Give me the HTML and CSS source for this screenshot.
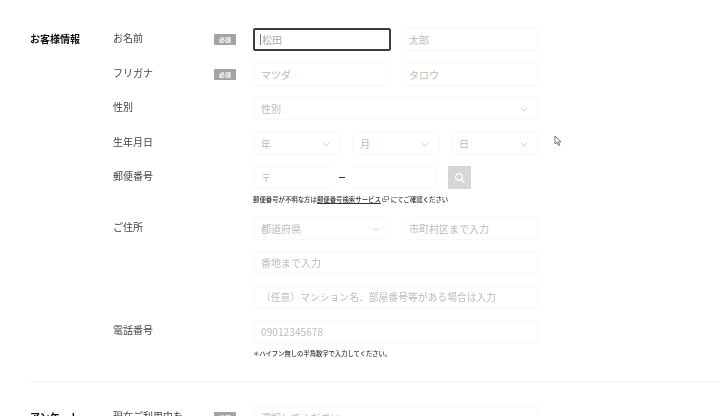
FILE: index.html
```html
<!DOCTYPE html>
<html lang="ja">
<head>
<meta charset="utf-8">
<title>お客様情報</title>
<link rel="stylesheet" href="styles.css">
</head>
<body>
<main class="page">
  <section class="section">
    <h2 class="heading">お客様情報</h2>
    <div class="rows">
      <div class="row">
        <div class="label">お名前</div><div class="badge-col"><span class="badge">必須</span></div>
        <div class="fields">
          <div class="field half focus"><span class="caret"></span>松田</div>
          <div class="field half">太郎</div>
        </div>
      </div>
      <div class="row">
        <div class="label">フリガナ</div><div class="badge-col"><span class="badge">必須</span></div>
        <div class="fields">
          <div class="field half">マツダ</div>
          <div class="field half">タロウ</div>
        </div>
      </div>
      <div class="row">
        <div class="label">性別</div><div class="badge-col"></div>
        <div class="fields">
          <div class="field full select">性別<svg class="chev" viewBox="0 0 8 5"><path d="M1 1l3 3 3-3"/></svg></div>
        </div>
      </div>
      <div class="row">
        <div class="label">生年月日</div><div class="badge-col"></div>
        <div class="fields trio">
          <div class="field third select">年<svg class="chev" viewBox="0 0 8 5"><path d="M1 1l3 3 3-3"/></svg></div>
          <div class="field third select">月<svg class="chev" viewBox="0 0 8 5"><path d="M1 1l3 3 3-3"/></svg></div>
          <div class="field third select">日<svg class="chev" viewBox="0 0 8 5"><path d="M1 1l3 3 3-3"/></svg></div>
        </div>
      </div>
      <div class="row tight">
        <div class="label">郵便番号</div><div class="badge-col"></div>
        <div class="stack">
          <div class="postal">
            <div class="field zip">〒</div>
            <span class="dash"></span>
            <div class="field zip2"></div>
            <button class="search" type="button" aria-label="検索">
              <svg viewBox="0 0 12 12"><circle cx="5" cy="5" r="3.4"/><path d="M7.6 7.6L10.6 10.6"/></svg>
            </button>
          </div>
          <p class="note">郵便番号が不明な方は<u>郵便番号検索サービス</u> <svg class="ext" viewBox="0 0 8 7"><path d="M2.5.7h5v3.6h-5zM.6 2.4v4h5"/></svg> にてご確認ください</p>
        </div>
      </div>
      <div class="row">
        <div class="label">ご住所</div><div class="badge-col"></div>
        <div class="stack addr">
          <div class="fields">
            <div class="field half select">都道府県<svg class="chev" viewBox="0 0 8 5"><path d="M1 1l3 3 3-3"/></svg></div>
            <div class="field half">市町村区まで入力</div>
          </div>
          <div class="field full">番地まで入力</div>
          <div class="field full large">（任意）マンション名、部屋番号等がある場合は入力</div>
        </div>
      </div>
      <div class="row last">
        <div class="label">電話番号</div><div class="badge-col"></div>
        <div class="stack">
          <div class="field full num">09012345678</div>
          <p class="note second">＊ハイフン無しの半角数字で入力してください。</p>
        </div>
      </div>
    </div>
  </section>
  <hr class="divider">
  <section class="section">
    <h2 class="heading">アンケート</h2>
    <div class="rows">
      <div class="row">
        <div class="label">現在ご利用中を</div><div class="badge-col"><span class="badge">必須</span></div>
        <div class="fields"><div class="field full">選択してください</div></div>
      </div>
    </div>
  </section>
</main>
<svg class="cursor" viewBox="0 0 8 12"><path d="M1 1v8l2-1.8L4.500 10.500l1.300-.6L4.400 6.800H7z"/></svg>
</body>
</html>
```
FILE: styles.css
```css
* { box-sizing: border-box; }
html, body { height: 100%; }
body {
  margin: 0;
  overflow: hidden;
  background: #fff;
  color: #3a3a3a;
  font-family: "Noto Sans CJK JP", "Noto Sans", sans-serif;
  position: relative;
}
.page { padding-top: 28px; filter: blur(0.45px); }
.section { display: flex; padding-left: 30px; }
.heading {
  width: 83px;
  flex: none;
  margin: 3px 0 0;
  font-size: 10px;
  line-height: 15px;
  font-weight: 700;
  color: #111;
}
.rows { flex: 1; display: flex; flex-direction: column; gap: 11.500px; }
.row { display: flex; }
.label {
  width: 101px;
  flex: none;
  padding-top: 2px;
  font-size: 10px;
  line-height: 16px;
  color: #444;
}
.badge-col { width: 39px; flex: none; padding-top: 6px; }
.badge {
  display: block;
  width: 22px;
  height: 11px;
  border-radius: 1px;
  background: #a3a3a3;
  color: #fff;
  font-size: 6px;
  font-weight: 700;
  line-height: 11px;
  text-align: center;
}
.fields { display: flex; gap: 10px; width: 286px; }
.trio { gap: 11px; }
.field {
  position: relative;
  height: 23px;
  display: flex;
  align-items: center;
  padding-left: 7px;
  border: 1px solid #f8f8f8;
  border-radius: 2px;
  font-size: 10px;
  color: #bcbcbc;
  background: #fff;
}
.half { width: 138px; }
.third { width: 88px; flex: none; }
.full { width: 286px; }
.focus { border: 2px solid #3c3c3c; padding-left: 5px; color: #a8a8a8; }
.caret { width: 1px; height: 11px; background: #777; margin-right: 1px; }
.chev {
  position: absolute;
  right: 10px;
  top: 9px;
  width: 8px;
  height: 5px;
  fill: none;
  stroke: #c8c8c8;
  stroke-width: 0.8;
}
.stack { display: flex; flex-direction: column; width: 286px; }
.addr { gap: 11.500px; }
.postal { display: flex; align-items: center; height: 23px; }
.zip { width: 82px; border-right-color: transparent; }
.zip2 { width: 86px; border-left-color: transparent; }
.dash { width: 6px; height: 1.500px; background: #333; margin: 0 6px 0 4px; flex: none; }
.search {
  width: 23px;
  height: 23px;
  margin-left: 11px;
  padding: 0;
  border: 0;
  background: #d6d6d6;
  display: flex;
  align-items: center;
  justify-content: center;
}
.search svg { width: 12px; height: 12px; fill: none; stroke: #fff; stroke-width: 1.300; }
.note {
  margin: 5px 0 0;
  font-size: 6.4px;
  line-height: 11px;
  font-weight: 500;
  color: #333;
  white-space: nowrap;
}
.note u { text-decoration: underline; }
.ext { width: 7px; height: 6px; fill: none; stroke: #555; stroke-width: 0.8; }
.second { margin-top: 5px; font-size: 6.3px; }
.large { font-size: 9.800px; }
.num { font-size: 10px; letter-spacing: 0.1px; }
.divider {
  margin: 22px 0 24px 30px;
  border: 0;
  border-top: 1px solid #f4f4f4;
}
.cursor {
  position: absolute;
  left: 554px;
  top: 135px;
  width: 8px;
  height: 12px;
  fill: #fff;
  stroke: #555;
  stroke-width: 0.8;
}
```
